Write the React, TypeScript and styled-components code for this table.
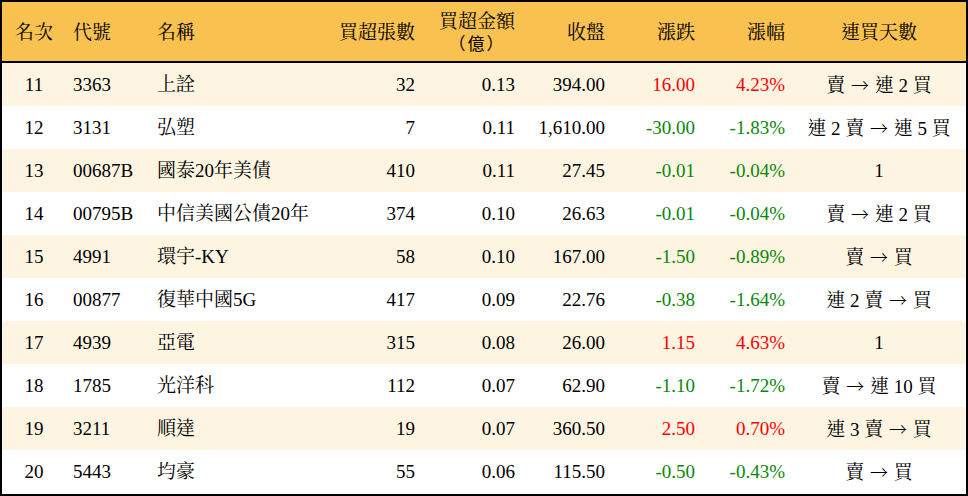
import React from "react";
import styled, { createGlobalStyle } from "styled-components";

const Global = createGlobalStyle`
  html, body { margin: 0; padding: 0; background: #fff; }
  body { font-family: "Liberation Serif", "Noto Serif CJK TC", "Noto Sans CJK TC", serif; }
`;

const cols = "64px 84px 180px 92px 100px 90px 90px 90px 1fr";

const Table = styled.div`
  width: 968px;
  height: 496px;
  box-sizing: border-box;
  border: 2px solid #000;
  display: flex;
  flex-direction: column;
  font-size: 19px;
  color: #000;
`;

const HeaderRow = styled.div`
  display: grid;
  grid-template-columns: ${cols};
  box-sizing: border-box;
  height: 61px;
  padding-top: 3px;
  background: #f8c150;
  border-bottom: 2px solid #000;
  align-items: center;
`;

const Row = styled.div<{ $alt: boolean }>`
  display: grid;
  grid-template-columns: ${cols};
  height: 43px;
  background: ${(p) => (p.$alt ? "#fdf4e1" : "#ffffff")};
  align-items: center;
`;

type Align = "left" | "right" | "center";

const Cell = styled.div<{ $align: Align; $color?: string }>`
  text-align: ${(p) => p.$align};
  padding-left: ${(p) => (p.$align === "left" ? "7px" : "0")};
  padding-right: ${(p) => (p.$align === "right" ? "7px" : "0")};
  color: ${(p) => p.$color || "#000"};
  white-space: nowrap;
  line-height: 22px;
`;

const Stack = styled.span`
  display: inline-block;
  text-align: center;
  line-height: 21px;
`;

const Paren = styled.span`
  font-family: "Noto Sans CJK TC", sans-serif;
  font-size: 17px;
  letter-spacing: 2px;
`;

const Arrow = styled.span`
  font-family: "Noto Sans CJK TC", sans-serif;
  font-weight: 300;
  font-size: 18px;
  margin: 0 1px;
`;

const aligns: Align[] = ["center", "left", "left", "right", "right", "right", "right", "right", "center"];

type R = [string, string, string, string, string, string, string, string, string];

const rows: R[] = [
  ["11", "3363", "上詮", "32", "0.13", "394.00", "16.00", "4.23%", "賣 → 連 2 買"],
  ["12", "3131", "弘塑", "7", "0.11", "1,610.00", "-30.00", "-1.83%", "連 2 賣 → 連 5 買"],
  ["13", "00687B", "國泰20年美債", "410", "0.11", "27.45", "-0.01", "-0.04%", "1"],
  ["14", "00795B", "中信美國公債20年", "374", "0.10", "26.63", "-0.01", "-0.04%", "賣 → 連 2 買"],
  ["15", "4991", "環宇-KY", "58", "0.10", "167.00", "-1.50", "-0.89%", "賣 → 買"],
  ["16", "00877", "復華中國5G", "417", "0.09", "22.76", "-0.38", "-1.64%", "連 2 賣 → 買"],
  ["17", "4939", "亞電", "315", "0.08", "26.00", "1.15", "4.63%", "1"],
  ["18", "1785", "光洋科", "112", "0.07", "62.90", "-1.10", "-1.72%", "賣 → 連 10 買"],
  ["19", "3211", "順達", "19", "0.07", "360.50", "2.50", "0.70%", "連 3 賣 → 買"],
  ["20", "5443", "均豪", "55", "0.06", "115.50", "-0.50", "-0.43%", "賣 → 買"],
];

const changeColor = (v: string) => (v.startsWith("-") ? "#0a870a" : "#ff0000");

function Streak({ text }: { text: string }) {
  const parts = text.split("→");
  if (parts.length === 1) return <>{text}</>;
  return (
    <>
      {parts[0]}
      <Arrow>→</Arrow>
      {parts[1]}
    </>
  );
}

export default function App() {
  return (
    <>
      <Global />
      <Table>
        <HeaderRow>
          <Cell $align="center">名次</Cell>
          <Cell $align="left">代號</Cell>
          <Cell $align="left">名稱</Cell>
          <Cell $align="right">買超張數</Cell>
          <Cell $align="right">
            <Stack>
              買超金額
              <br />
              <Paren>（億）</Paren>
            </Stack>
          </Cell>
          <Cell $align="right">收盤</Cell>
          <Cell $align="right">漲跌</Cell>
          <Cell $align="right">漲幅</Cell>
          <Cell $align="center">連買天數</Cell>
        </HeaderRow>
        {rows.map((r, i) => (
          <Row key={r[0]} $alt={i % 2 === 0}>
            {r.map((v, j) => (
              <Cell
                key={j}
                $align={aligns[j]}
                $color={j === 6 || j === 7 ? changeColor(r[6]) : undefined}
              >
                {j === 8 ? <Streak text={v} /> : v}
              </Cell>
            ))}
          </Row>
        ))}
      </Table>
    </>
  );
}
